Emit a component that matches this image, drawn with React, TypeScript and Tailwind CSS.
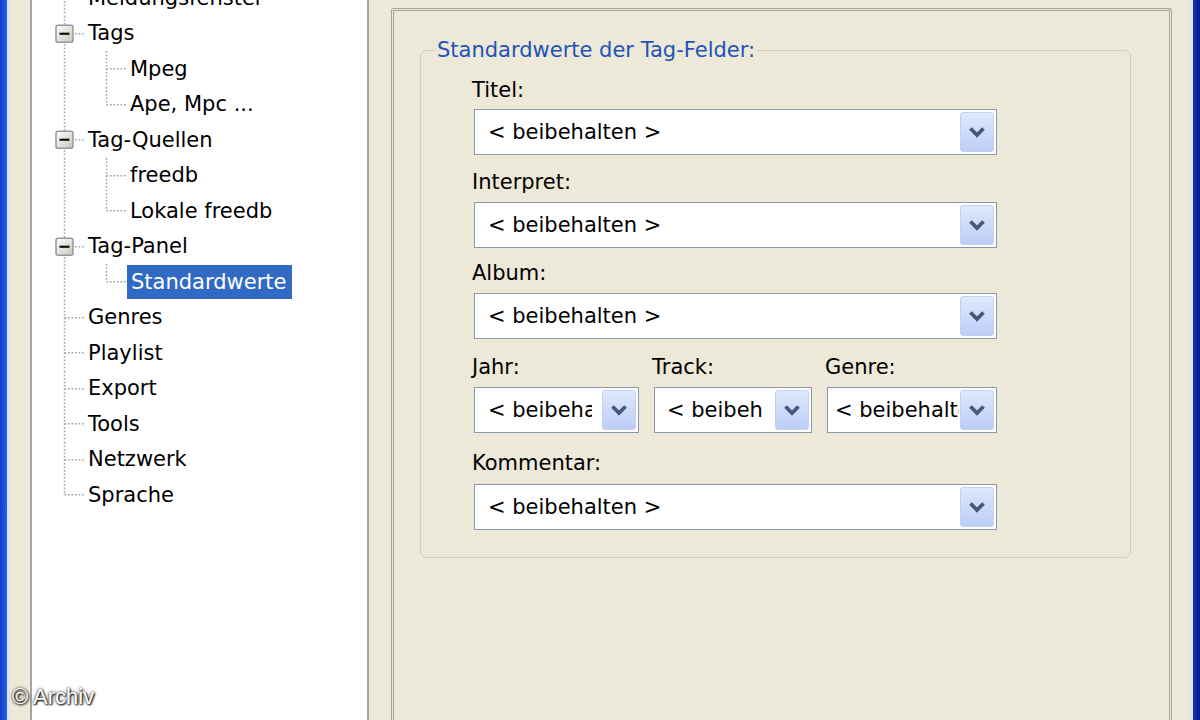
import React from "react";

type Node = {
  label: string;
  level: 0 | 1;
  expander?: boolean;
  last?: boolean;
  selected?: boolean;
};

const nodes: Node[] = [
  { label: "Meldungsfenster", level: 0 },
  { label: "Tags", level: 0, expander: true },
  { label: "Mpeg", level: 1 },
  { label: "Ape, Mpc ...", level: 1, last: true },
  { label: "Tag-Quellen", level: 0, expander: true },
  { label: "freedb", level: 1 },
  { label: "Lokale freedb", level: 1, last: true },
  { label: "Tag-Panel", level: 0, expander: true },
  { label: "Standardwerte", level: 1, last: true, selected: true },
  { label: "Genres", level: 0 },
  { label: "Playlist", level: 0 },
  { label: "Export", level: 0 },
  { label: "Tools", level: 0 },
  { label: "Netzwerk", level: 0 },
  { label: "Sprache", level: 0, last: true },
];

const DOT = { stroke: "#a8a8a8", strokeWidth: 1.5, strokeDasharray: "1.75 1.75" };

function TreeLines({ level, last, expander }: { level: 0 | 1; last?: boolean; expander?: boolean }) {
  const w = 42 * (level + 1);
  const h = 35.5;
  const mid = 17.75;
  const cx = 42 * level + 21.5;
  return (
    <svg width={w} height={h} viewBox={`0 0 ${w} ${h}`} className="shrink-0">
      {level === 1 && <line x1={21.5} y1={0} x2={21.5} y2={h} {...DOT} />}
      <line x1={cx} y1={0} x2={cx} y2={last ? mid : h} {...DOT} />
      <line x1={cx} y1={mid} x2={42 * level + 42} y2={mid} {...DOT} />
      {expander && (
        <g>
          <defs>
            <linearGradient id="expg" x1="0" y1="0" x2="1" y2="1">
              <stop offset="0" stopColor="#ffffff" />
              <stop offset="1" stopColor="#c9c5b5" />
            </linearGradient>
          </defs>
          <rect x={13} y={9.25} width={17} height={17} rx={2} fill="url(#expg)" stroke="#8e9aa6" strokeWidth={1.5} />
          <line x1={16.5} y1={17.75} x2={26.5} y2={17.75} stroke="#111" strokeWidth={2.2} />
        </g>
      )}
    </svg>
  );
}

function Chevron() {
  return (
    <svg width="18" height="12" viewBox="0 0 18 12">
      <path d="M2.5 2.5 L9 9 L15.5 2.5" fill="none" stroke="#45597e" strokeWidth="3.8" strokeLinejoin="miter" />
    </svg>
  );
}

function Combo({ boxCls, textCls, text }: { boxCls: string; textCls: string; text: string }) {
  return (
    <div className={`flex h-[46px] shrink-0 items-stretch border border-[#8899ad] bg-white p-[2px] ${boxCls}`}>
      <div className="flex min-w-0 flex-1 items-center overflow-hidden">
        <span className={`block overflow-hidden whitespace-nowrap text-[21px] leading-[26px] text-black ${textCls}`}>{text}</span>
      </div>
      <div className="flex w-[34px] shrink-0 items-center justify-center rounded-[3px] border border-[#c3d0f0] bg-gradient-to-b from-[#dfe8fd] to-[#bccdf6]">
        <Chevron />
      </div>
    </div>
  );
}

function Label({ children, cls = "" }: { children: React.ReactNode; cls?: string }) {
  return <div className={`text-[21px] leading-[24px] text-black ${cls}`}>{children}</div>;
}

export default function App() {
  const val = "< beibehalten >";
  return (
    <div
      className="relative flex h-[720px] w-[1200px] overflow-hidden bg-[#ece9d8]"
      style={{ fontFamily: '"DejaVu Sans", Verdana, sans-serif' }}
    >
      <div className="w-[7px] shrink-0 bg-gradient-to-r from-[#0b3cc6] to-[#2c60e2]" />
      <div className="w-[3px] shrink-0 bg-[#dde5ef]" />
      <div className="w-[20px] shrink-0" />

      {/* Tree */}
      <div className="w-[339px] shrink-0 overflow-hidden border-x-2 border-[#a4a4a4] bg-white">
        <div className="mt-[-20px]">
          {nodes.map((n) => (
            <div key={n.label} className="flex h-[35.5px] items-center pl-[11px]">
              <TreeLines level={n.level} last={n.last} expander={n.expander} />
              {n.selected ? (
                <span className="flex h-[34px] items-center bg-[#316ac5] pl-[4px] pr-[6px] text-[21px] leading-[24px] text-white">
                  {n.label}
                </span>
              ) : (
                <span className="px-[3px] text-[21px] leading-[24px] text-black whitespace-nowrap">{n.label}</span>
              )}
            </div>
          ))}
        </div>
      </div>

      <div className="w-[22px] shrink-0" />

      {/* Panel */}
      <div className="mt-[8px] h-[740px] w-[781px] shrink-0 rounded-t-[3px] border-[3px] border-b-0 border-double border-[#a7a596]">
        <fieldset className="ml-[26px] mt-[27px] w-[711px] rounded-[6px] border border-[#d0d0bf] px-0 pb-[27px]">
          <legend className="ml-[14px] px-[2px] text-[21px] leading-[24px] text-[#2352b8]">
            Standardwerte der Tag-Felder:
          </legend>
          <div className="flex flex-col pl-[51px] pt-[16px]">
            <Label>Titel:</Label>
            <Combo boxCls="ml-[2px] mt-[7px] w-[523px]" textCls="ml-[11px]" text={val} />

            <Label cls="mt-[15px]">Interpret:</Label>
            <Combo boxCls="ml-[2px] mt-[8px] w-[523px]" textCls="ml-[11px]" text={val} />

            <Label cls="mt-[13px]">Album:</Label>
            <Combo boxCls="ml-[2px] mt-[8px] w-[523px]" textCls="ml-[11px]" text={val} />

            <div className="mt-[16px] flex gap-[13px]">
              <div className="flex w-[167px] flex-col">
                <Label>Jahr:</Label>
                <Combo boxCls="ml-[2px] mt-[8px] w-[165px]" textCls="ml-[11px] w-[104px]" text={val} />
              </div>
              <div className="flex w-[160px] flex-col">
                <Label>Track:</Label>
                <Combo boxCls="ml-[2px] mt-[8px] w-[158px]" textCls="ml-[10px] w-[97px]" text={val} />
              </div>
              <div className="flex w-[172px] flex-col">
                <Label>Genre:</Label>
                <Combo boxCls="ml-[2px] mt-[8px] w-[170px]" textCls="ml-[5px] w-[124px]" text={val} />
              </div>
            </div>

            <Label cls="mt-[18px]">Kommentar:</Label>
            <Combo boxCls="ml-[2px] mt-[9px] w-[523px]" textCls="ml-[11px]" text={val} />
          </div>
        </fieldset>
      </div>

      <div className="w-[18px] shrink-0" />
      <div className="w-[3px] shrink-0 bg-[#dfe6ee]" />
      <div className="w-[7px] shrink-0 bg-gradient-to-r from-[#1438b8] to-[#001a8e]" />

      <div
        className="absolute left-[12px] top-[684px] text-[22px] leading-[26px] text-white [text-shadow:0_0_3px_#000,1px_1px_2px_#000]"
        style={{ fontFamily: '"Liberation Sans", Arial, sans-serif' }}
      >
        © Archiv
      </div>
    </div>
  );
}
